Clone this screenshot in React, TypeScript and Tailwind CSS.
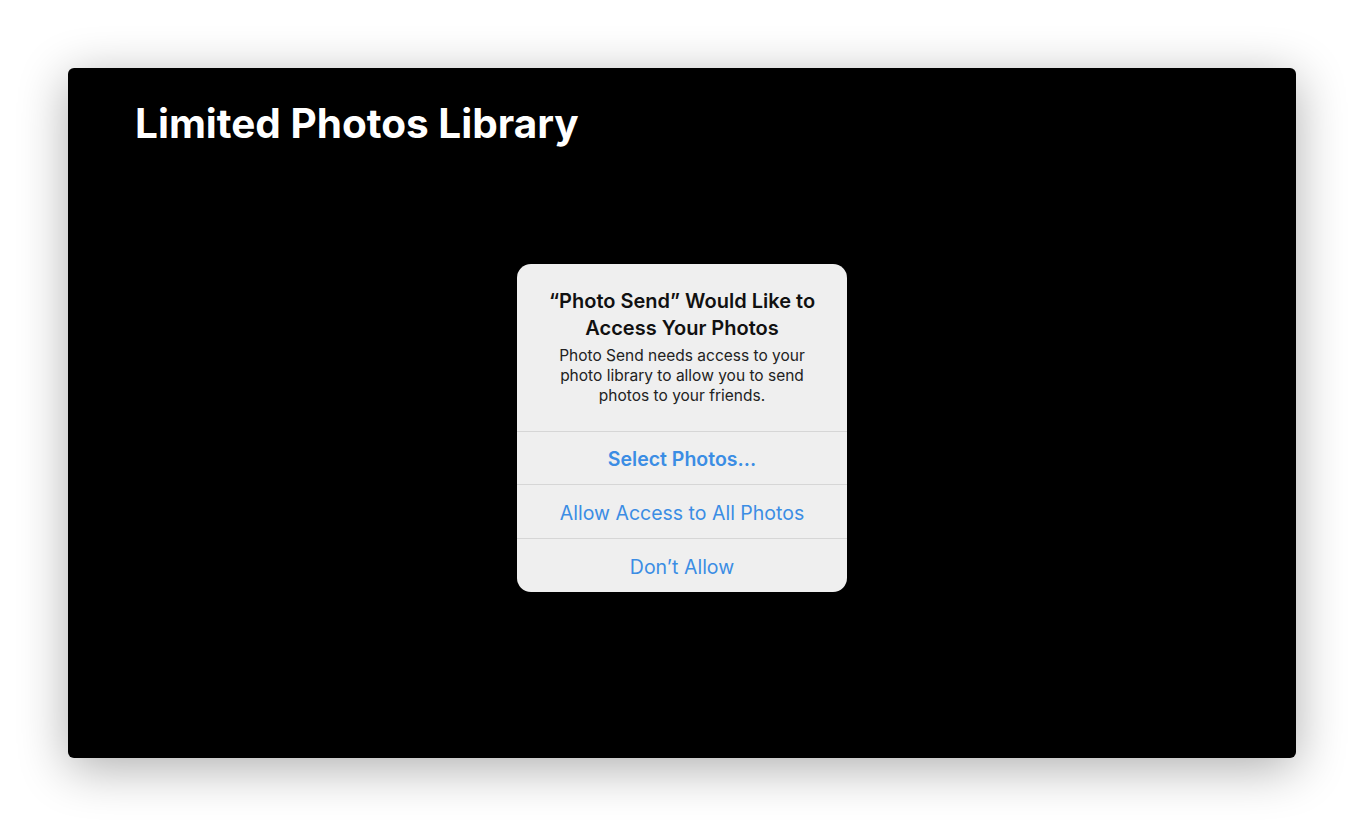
const font = { fontFamily: "Inter, 'Liberation Sans', sans-serif" };

function AlertButton({ label, bold }: { label: string; bold?: boolean }) {
  return (
    <button
      type="button"
      className={`h-[54px] w-full border-t border-[#d6d6d6] pt-[4px] text-[19.5px] text-[#3b8de4] ${
        bold ? "font-semibold" : "font-normal"
      }`}
    >
      {label}
    </button>
  );
}

export default function App() {
  return (
    <div className="min-h-[826px] w-full bg-white pt-[68px] pl-[68px]" style={font}>
      <div className="flex h-[690px] w-[1228px] flex-col rounded-[6px] bg-black shadow-[0_10px_50px_rgba(0,0,0,0.32)]">
        <h1 className="pl-[67px] pt-[32px] text-[40.5px] font-bold leading-[48px] text-white">
          Limited Photos Library
        </h1>
        <div className="flex flex-1 justify-center pt-[116px]">
          <div className="flex h-[328px] w-[330px] flex-col overflow-hidden rounded-[14px] bg-[#efefef]">
            <div className="flex h-[167px] flex-col items-center px-3 pt-[24px] text-center">
              <p className="text-[20px] font-semibold leading-[27px] text-[#111]">
                “Photo Send” Would Like to
                <br />
                Access Your Photos
              </p>
              <p className="mt-[4px] text-[15.5px] leading-[20px] text-[#222]">
                Photo Send needs access to your
                <br />
                photo library to allow you to send
                <br />
                photos to your friends.
              </p>
            </div>
            <AlertButton label="Select Photos..." bold />
            <AlertButton label="Allow Access to All Photos" />
            <AlertButton label="Don’t Allow" />
          </div>
        </div>
      </div>
    </div>
  );
}
